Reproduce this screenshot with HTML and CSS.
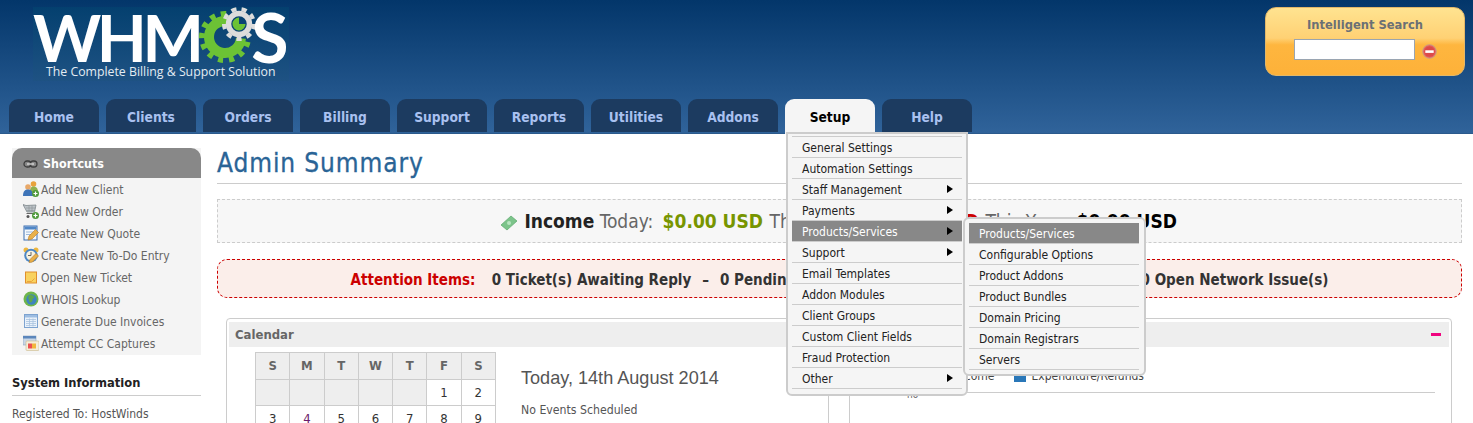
FILE: index.html
```html
<!DOCTYPE html>
<html lang="en">
<head>
<meta charset="utf-8">
<title>WHMCS Admin Summary</title>
<link rel="stylesheet" href="styles.css">
</head>
<body>
<header class="top">
  <div class="top-row">
    <a class="logo" href="#">
      <span class="logo-word">
        <span class="logo-whm">WHM</span>
        <svg class="logo-gears" width="62" height="60" viewBox="0 0 62 60" aria-hidden="true">
          <g fill="none" transform="translate(0 -13)">
            <circle cx="27" cy="43" r="16" stroke="#6cc235" stroke-width="10" pathLength="360" stroke-dasharray="285 75" transform="rotate(5 27 43)"/>
            <circle cx="27" cy="43" r="23" stroke="#6cc235" stroke-width="6" pathLength="360" stroke-dasharray="13 14.5 13 14.5 13 14.5 13 14.5 13 14.5 13 14.5 13 14.5 13 14.5 13 14.5 13 114" transform="rotate(12 27 43)"/>
            <circle cx="41" cy="30" r="10.5" stroke="#dcdcdc" stroke-width="5.5"/>
            <circle cx="41" cy="30" r="15" stroke="#dcdcdc" stroke-width="4" pathLength="360" stroke-dasharray="20 20"/>
            <path d="M41 23.5a6.5 6.5 0 1 0 6.5 6.5H41z" fill="#6cc235"/>
          </g>
        </svg>
        <span class="logo-s">S</span>
      </span>
      <span class="logo-tag">The Complete Billing &amp; Support Solution</span>
    </a>
    <form class="search">
      <label class="search-title" for="q">Intelligent Search</label>
      <div class="search-row">
        <input id="q" class="search-input" type="text">
        <svg class="search-close" width="15" height="15" viewBox="0 0 15 15" aria-hidden="true">
          <circle cx="7.5" cy="7.5" r="6.8" fill="#e8605c" stroke="#c9a080"/>
          <circle cx="7.5" cy="7.5" r="5.2" fill="#dc4a48"/>
          <rect x="3.3" y="6.3" width="8.4" height="2.6" fill="#fff"/>
        </svg>
      </div>
    </form>
  </div>
  <nav>
    <ul class="tabs">
      <li class="tab">Home</li>
      <li class="tab">Clients</li>
      <li class="tab">Orders</li>
      <li class="tab">Billing</li>
      <li class="tab">Support</li>
      <li class="tab">Reports</li>
      <li class="tab">Utilities</li>
      <li class="tab">Addons</li>
      <li class="tab tab-active">Setup
        <ul class="menu">
          <li class="menu-item">General Settings</li>
          <li class="menu-item">Automation Settings</li>
          <li class="menu-item has-sub">Staff Management</li>
          <li class="menu-item has-sub">Payments</li>
          <li class="menu-item has-sub is-hot">Products/Services
            <ul class="submenu">
              <li class="menu-item is-hot">Products/Services</li>
              <li class="menu-item">Configurable Options</li>
              <li class="menu-item">Product Addons</li>
              <li class="menu-item">Product Bundles</li>
              <li class="menu-item">Domain Pricing</li>
              <li class="menu-item">Domain Registrars</li>
              <li class="menu-item">Servers</li>
            </ul>
          </li>
          <li class="menu-item has-sub">Support</li>
          <li class="menu-item">Email Templates</li>
          <li class="menu-item">Addon Modules</li>
          <li class="menu-item">Client Groups</li>
          <li class="menu-item">Custom Client Fields</li>
          <li class="menu-item">Fraud Protection</li>
          <li class="menu-item has-sub">Other</li>
        </ul>
      </li>
      <li class="tab">Help</li>
    </ul>
  </nav>
</header>

<div class="page">
  <aside class="side">
    <section class="shortcuts">
      <h3 class="shortcuts-head">
        <svg width="15" height="8" viewBox="0 0 15 8" aria-hidden="true"><g fill="none" stroke="#3d3d3d" stroke-width="1.3"><rect x="1" y="1" width="7" height="6" rx="3"/><rect x="7" y="1" width="7" height="6" rx="3"/></g><path d="M4 4h7" stroke="#ddd" stroke-width="1.3"/></svg>
        Shortcuts
      </h3>
      <ul class="shortcut-list">
        <li class="shortcut">
          <svg width="16" height="16" viewBox="0 0 16 16" aria-hidden="true"><circle cx="10.5" cy="3" r="2.8" fill="#e9a23b"/><path d="M7 11c0-4 1-5.500 3.500-5.500S15 7 15 11z" fill="#8fb14e"/><circle cx="5" cy="6" r="2.8" fill="#e8a868"/><path d="M0 15c0-5 2-6.500 5-6.500s5 1.500 5 6.500z" fill="#3e74b8"/><circle cx="12.500" cy="12.500" r="3.500" fill="#4f9a3a"/><path d="M12.500 10.500v4M10.500 12.500h4" stroke="#fff" stroke-width="1.200"/></svg>
          Add New Client
        </li>
        <li class="shortcut">
          <svg width="16" height="16" viewBox="0 0 16 16" aria-hidden="true"><path d="M0 1.500l3 1 10-.5-1.500 7H4z" fill="#bcc3c8" stroke="#7f888c" stroke-width=".8"/><path d="M3 5h9.500M3.500 7.500h8.500M6 2.500v6M9 2.500v6" stroke="#8a9296" stroke-width=".6"/><path d="M3.500 10.500h9" stroke="#666" stroke-width="1"/><circle cx="5" cy="13.500" r="1.500" fill="#555"/><circle cx="12.500" cy="12.500" r="3.500" fill="#4f9a3a"/><path d="M12.500 10.500v4M10.500 12.500h4" stroke="#fff" stroke-width="1.200"/></svg>
          Add New Order
        </li>
        <li class="shortcut">
          <svg width="16" height="16" viewBox="0 0 16 16" aria-hidden="true"><rect x="1" y="1" width="13" height="14" fill="#f4f8fc" stroke="#3c6eb0"/><rect x="1.500" y="1.500" width="12" height="3" fill="#4f86c6"/><path d="M3 7h7M3 9.500h5" stroke="#9db8d8"/><path d="M5 15l1-4 6.500-6.500 3 3L9 14z" fill="#e9b04a" stroke="#b87b22" stroke-width=".6"/></svg>
          Create New Quote
        </li>
        <li class="shortcut">
          <svg width="16" height="16" viewBox="0 0 16 16" aria-hidden="true"><circle cx="3" cy="3" r="2.500" fill="#efb73e"/><circle cx="13" cy="3" r="2.500" fill="#efb73e"/><circle cx="8" cy="8.500" r="6.800" fill="#4d87c5"/><circle cx="8" cy="8.500" r="4.800" fill="#f6f1df"/><path d="M8 5v3.500H5" stroke="#666" fill="none"/><path d="M6 15.500l1-3 6-6 2.500 2.500-6 6z" fill="#e9b04a" stroke="#b87b22" stroke-width=".6"/></svg>
          Create New To-Do Entry
        </li>
        <li class="shortcut">
          <svg width="16" height="16" viewBox="0 0 16 16" aria-hidden="true"><rect x="2.500" y="3" width="11" height="11" fill="#f9d25f" stroke="#e08e2c"/><path d="M4 12.500h4.500l3-3" fill="none" stroke="#eba43c"/></svg>
          Open New Ticket
        </li>
        <li class="shortcut">
          <svg width="16" height="16" viewBox="0 0 16 16" aria-hidden="true"><circle cx="8" cy="8" r="7.500" fill="#6eb54b"/><circle cx="8.500" cy="8.500" r="5.200" fill="#3d83c0"/><path d="M6 4.500c3-1 5 0 5.500 2-1 1-2 .5-2 2.500s-2 3-3 2 0-3-1.500-4z" fill="#5fa650"/></svg>
          WHOIS Lookup
        </li>
        <li class="shortcut">
          <svg width="16" height="16" viewBox="0 0 16 16" aria-hidden="true"><rect x="1.500" y="1.500" width="13" height="13" fill="#eaf2fb" stroke="#7da3d0"/><rect x="2" y="2" width="12" height="2.500" fill="#9dbde2"/><path d="M3 6.500h10M3 8.500h10M3 10.500h10M3 12.500h10M6.500 5.500v8M10 5.500v8" stroke="#a9c3e0" stroke-width=".8"/></svg>
          Generate Due Invoices
        </li>
        <li class="shortcut">
          <svg width="16" height="16" viewBox="0 0 16 16" aria-hidden="true"><rect x="0" y="1" width="13" height="9" fill="#c9d6e6" stroke="#8ba3c0" stroke-width=".6"/><rect x="0" y="1" width="13" height="2.500" fill="#5b86bb"/><rect x="3" y="6" width="13" height="9.500" rx="1" fill="#f5eed9" stroke="#c9b98a" stroke-width=".6"/><rect x="5" y="8.500" width="4" height="5" fill="#ec5050"/><rect x="9" y="8.500" width="4" height="5" fill="#f2b63c"/></svg>
          Attempt CC Captures
        </li>
      </ul>
    </section>
    <h3 class="side-title">System Information</h3>
    <p class="side-text">Registered To: HostWinds</p>
  </aside>

  <main class="main">
    <h1 class="title">Admin Summary</h1>
    <div class="income">
      <svg class="income-icon" width="16" height="16" viewBox="0 0 16 16" aria-hidden="true"><path d="M0 10L10 1l6 5-10 9z" fill="#7cc48a" stroke="#5aa86c" stroke-width=".7"/><circle cx="8" cy="8" r="2" fill="#b8e4c0"/></svg>
      <b class="income-label">Income</b> Today: <b class="amt amt-green">$0.00 USD</b> This Month: <b class="amt amt-red">$0.00 USD</b> This Year: <b class="amt amt-black">$0.00 USD</b>
    </div>
    <div class="attention">
      <b class="attention-label">Attention Items:</b>
      <span class="attention-text">0 Ticket(s) Awaiting Reply<span class="sep">&ndash;</span>0 Pending Order(s)<span class="sep sep-wide">&ndash;</span>0 Overdue Invoice(s)<span class="sep sep-wide">&ndash;</span>0 Open Network Issue(s)</span>
    </div>
    <div class="widgets">
      <section class="panel">
        <h4 class="panel-head">Calendar</h4>
        <div class="cal">
          <table class="cal-table">
            <tr><th>S</th><th>M</th><th>T</th><th>W</th><th>T</th><th>F</th><th>S</th></tr>
            <tr><td class="off"></td><td class="off"></td><td class="off"></td><td class="off"></td><td class="off"></td><td>1</td><td>2</td></tr>
            <tr><td>3</td><td class="link">4</td><td>5</td><td>6</td><td>7</td><td>8</td><td>9</td></tr>
          </table>
          <div class="cal-info">
            <h2 class="cal-date">Today, 14th August 2014</h2>
            <p class="cal-note">No Events Scheduled</p>
          </div>
        </div>
      </section>
      <section class="panel">
        <h4 class="panel-head panel-head-end"><span>Income Overview</span><i class="collapse"></i></h4>
        <div class="chart">
          <div class="legend"><span class="legend-item">Income</span><i class="legend-box"></i><span class="legend-item">Expenditure/Refunds</span></div>
          <div class="axis"><span class="axis-label">no</span></div>
        </div>
      </section>
    </div>
  </main>
</div>
</body>
</html>
```
FILE: styles.css
```css
* { box-sizing: border-box; }
html, body { margin: 0; height: 423px; overflow: hidden; }
body { background: #fff; color: #555; font: 12px "DejaVu Sans", Verdana, sans-serif; font-stretch: condensed; }
ul { list-style: none; margin: 0; padding: 0; }
h1, h2, h3, h4, p { margin: 0; }

.top { height: 134px; background: linear-gradient(#03366a, #30639a); border-bottom: 1px solid #2b5a8c; }
.top-row { height: 99px; display: flex; justify-content: space-between; padding: 7px 8px 0 33px; }

.logo { display: block; width: 256px; height: 74px; color: #fff; text-decoration: none; background: linear-gradient(#04406f, #1e5283); }
.logo-word { display: flex; height: 54px; align-items: flex-start; font: 700 65px/60px "Lato", sans-serif; }
.logo-whm { letter-spacing: -4.5px; }
.logo-gears { flex: none; margin-left: -1px; margin-right: -9px; }
.logo-s { font-size: 68px; }
.logo-tag { display: block; margin: 3px 0 0 13px; font: 12.3px/16px "Open Sans", sans-serif; color: #e4ecf2; white-space: nowrap; }

.search { width: 200px; height: 69px; border: 1px solid #e2b769; border-radius: 11px; background: linear-gradient(#ffe390, #ffd174 45%, #feb63f 55%, #fdb139); text-align: center; padding-top: 9px; }
.search-title { display: block; font-weight: 700; font-size: 12.8px; line-height: 15px; color: #6b7075; }
.search-row { display: flex; align-items: center; margin: 7px 0 0 28px; gap: 7px; }
.search-input { width: 121px; height: 21px; border: 1px solid #9aa5b1; background: #fff; padding: 0; }
.search-close { margin-top: 3px; }

.tabs { display: flex; gap: 7px; padding-left: 9px; height: 33px; }
.tab { width: 90px; height: 33px; border-radius: 9px 9px 0 0; background: #1c3b60; color: #a9c1f0; font-weight: 700; font-size: 13.7px; line-height: 37px; text-align: center; position: relative; }
.tab-active { height: 35px; background: #f5f5f5; color: #000; z-index: 2; }

.menu, .submenu { position: absolute; background: #f5f5f5; border: 2px solid #ccc; border-radius: 0 0 6px 6px; font-weight: 400; font-size: 12px; line-height: 22px; text-align: left; color: #222; }
.menu { left: 1px; top: 33px; width: 182px; padding: 2px 4px 5px; }
.menu > .menu-item:first-child { height: 22px; border-top: 1px solid #ccc; }
.submenu { left: 171px; top: -4px; width: 183px; padding: 4px 5px 4px 4px; border-radius: 6px; }
.menu-item { position: relative; height: 21px; padding-left: 10px; border-bottom: 1px solid #ccc; }
.is-hot { background: #888; color: #fff; }
.submenu .menu-item { color: #222; }
.submenu .is-hot { color: #fff; }
.has-sub::after { content: ""; position: absolute; left: 155px; top: 6px; border: 4px solid transparent; border-left: 6px solid #000; border-right: 0; }

.page { display: flex; gap: 16px; padding: 14px 11px 0 12px; }
.side { width: 189px; flex: none; }
.shortcuts { background: #f4f4f4; height: 207px; }
.shortcuts-head { display: flex; align-items: center; gap: 5px; height: 30px; padding: 1px 0 0 11px; background: #888; border-radius: 10px 10px 0 0; color: #fff; font-size: 12.400px; }
.shortcut { display: flex; align-items: center; gap: 2px; height: 22px; padding: 2px 0 0 11px; font-size: 12px; color: #666; white-space: nowrap; }
.shortcut svg { flex: none; margin-top: -2px; }
.side-title { margin-top: 20px; padding-bottom: 4px; border-bottom: 1px solid #ccc; font-size: 12.800px; line-height: 16px; color: #222; }
.side-text { margin-top: 11px; font-size: 12px; line-height: 14px; }

.main { flex: 1; min-width: 0; }
.title { height: 36px; border-bottom: 1px solid #ccc; color: #2a6496; font-weight: 400; font-size: 26px; line-height: 30px; letter-spacing: .9px; -webkit-text-stroke: .3px #2a6496; }
.income { height: 44px; margin-top: 15px; border: 1px dashed #ccc; background: #f7f7f7; font-size: 19px; line-height: 43px; text-align: center; color: #666; white-space: nowrap; overflow: hidden; }
.income-icon { vertical-align: -3px; margin-right: 2px; }
.income-label { color: #222; }
.amt { margin: 0 1px 0 4px; }
.amt-green { color: #779500; }
.amt-red { color: #c00; }
.amt-black { color: #000; }
.attention { height: 39px; margin-top: 16px; border: 1px dashed #c00; border-radius: 10px; background: #fbeeea; font-size: 15px; line-height: 40px; text-align: center; white-space: nowrap; overflow: hidden; }
.attention-label { color: #c00; margin-right: 12px; }
.attention-text { color: #333; font-weight: 700; }
.sep { margin: 0 11px; }
.sep-wide { margin: 0 26px; }

.widgets { display: grid; grid-template-columns: 603px 603px; gap: 20px; margin: 20px 0 0 9px; }
.panel { height: 200px; border: 1px solid #ccc; border-radius: 4px; padding: 3px 2px; }
.panel-head { display: flex; justify-content: space-between; align-items: center; height: 25px; padding: 0 8px 0 6px; background: #eee; color: #666; font-size: 13px; }
.collapse { width: 10px; height: 3px; background: #f0047f; }
.cal { display: flex; margin: 5px 0 0 26px; align-items: flex-start; }
.cal-table { border-collapse: collapse; width: 241px; table-layout: fixed; color: #333; font-size: 13px; }
.cal-table th, .cal-table td { border: 1px solid #ccc; height: 26.500px; padding: 0; text-align: center; }
.cal-table th { background: #eee; color: #666; }
.cal-table .off { background: #eee; }
.cal-table .link { color: #6b1a6b; }
.cal-info { margin-left: 25px; padding-top: 16px; }
.cal-date { font: 400 18.100px/20px "Liberation Sans", sans-serif; color: #555; }
.cal-note { margin-top: 15px; font-size: 12.200px; line-height: 14px; }
.chart { padding: 22px 14px 0 0; }
.legend { display: flex; justify-content: flex-end; align-items: center; gap: 5px; height: 14px; margin-right: 291px; font-size: 12px; color: #444; }
.legend-box { width: 12px; height: 12px; margin-left: 15px; background: #2a77b8; }
.axis { margin-top: 9px; border-top: 1px solid #ccc; height: 20px; }
.axis-label { display: block; margin: -3px 0 0 55px; font-size: 10px; line-height: 10px; color: #666; }
```
